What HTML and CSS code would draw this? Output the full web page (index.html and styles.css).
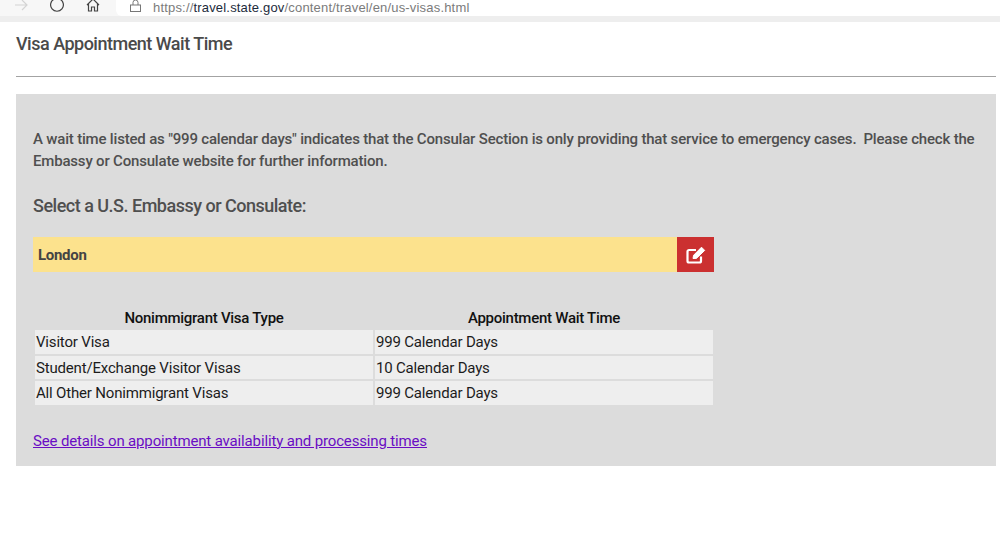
FILE: index.html
```html
<!DOCTYPE html>
<html lang="en">
<head>
    <meta charset="UTF-8">
    <meta name="viewport" content="width=device-width, initial-scale=1.0">
    <title>Visa Appointment Wait Time</title>
    <link rel="stylesheet" href="styles.css">
</head>
<body>
    <div class="browser-bar">
        <svg class="nav-icon" width="16" height="16" viewBox="0 0 16 16" fill="none" stroke="#d4d4d4" stroke-width="1.2"><path d="M2 8h12M9 3l5 5-5 5"/></svg>
        <svg class="nav-icon" width="16" height="16" viewBox="0 0 16 16" fill="none" stroke="#444" stroke-width="1.2"><path d="M11 2.2A6.4 6.4 0 1 1 5 2.2"/></svg>
        <svg class="nav-icon" width="16" height="16" viewBox="0 0 16 16" fill="none" stroke="#444" stroke-width="1.2"><path d="M2 8l6-6 6 6M3.500 7v7h3v-4h3v4h3V7"/></svg>
        <div class="address-bar">
            <svg class="lock" width="11" height="12" viewBox="0 0 11 12" fill="none" stroke="#777" stroke-width="1"><rect x="0.500" y="5" width="10" height="6.500"/><path d="M3 5V2.500a2.500 2.500 0 0 1 5 0V5"/></svg>
            <span class="url">https://<b>travel.state.gov</b>/content/travel/en/us-visas.html</span>
        </div>
    </div>

    <div class="page">
        <h1>Visa Appointment Wait Time</h1>
        <hr class="title-rule">

        <div class="panel">
            <p class="notice">A wait time listed as "999 calendar days" indicates that the Consular Section is only providing that service to emergency cases.&nbsp; Please check the Embassy or Consulate website for further information.</p>
            <h2>Select a U.S. Embassy or Consulate:</h2>

            <div class="post-select">
                <div class="post-name">London</div>
                <div class="edit-btn">
                    <svg width="20" height="18" viewBox="0 0 20 18" fill="none" stroke="#fff" stroke-width="2.2"><path d="M15 10.500V15a1.500 1.500 0 0 1-1.500 1.500H3A1.500 1.500 0 0 1 1.500 15V5.500A1.500 1.500 0 0 1 3 4h7"/><path d="M7 12.500l.6-3.200L15.500 1.200l3.200 3.200-8.300 8z" fill="#fff" stroke-width="1"/></svg>
                </div>
            </div>

            <table class="wait-table">
                <thead>
                    <tr><th>Nonimmigrant Visa Type</th><th>Appointment Wait Time</th></tr>
                </thead>
                <tbody>
                    <tr><td>Visitor Visa</td><td>999 Calendar Days</td></tr>
                    <tr><td>Student/Exchange Visitor Visas</td><td>10 Calendar Days</td></tr>
                    <tr><td>All Other Nonimmigrant Visas</td><td>999 Calendar Days</td></tr>
                </tbody>
            </table>

            <a class="details-link" href="#">See details on appointment availability and processing times</a>
        </div>
    </div>
</body>
</html>
```

FILE: styles.css
```css
html, body {
    margin: 0;
    padding: 0;
}
body {
    font-family: Roboto, Arial, sans-serif;
    background-color: #fff;
    color: #4a4a4a;
    height: 535px;
    overflow: hidden;
}
.browser-bar {
    display: flex;
    align-items: flex-start;
    height: 16px;
    padding-left: 13px;
    background-color: #f7f7f7;
    border-bottom: 6px solid #eeeeee;
}
.nav-icon {
    margin-right: 20px;
    flex-shrink: 0;
    margin-top: -3px;
}
.address-bar {
    display: flex;
    align-items: flex-start;
    gap: 12px;
    flex: 1;
    height: 16px;
    margin-left: -5px;
    padding-left: 14px;
    background-color: #fff;
    border-bottom-left-radius: 6px;
}
.url {
    font-family: "Liberation Sans", Arial, sans-serif;
    font-size: 13px;
    line-height: 15px;
    letter-spacing: 0.18px;
    color: #7b7b7b;
}
.url b {
    font-weight: 400;
    color: #1c2b3c;
}
.page {
    padding: 0 4px 0 16px;
}
h1 {
    font-size: 18px;
    font-weight: 500;
    line-height: 22px;
    letter-spacing: -0.5px;
    margin: 11px 0 0;
    color: #4a4a4a;
}
.title-rule {
    border: 0;
    border-top: 1px solid #a3a3a3;
    margin: 21px 0 17px;
}
.panel {
    background-color: #dcdcdc;
    padding: 34px 17px 15px;
    height: 372px;
    box-sizing: border-box;
}
.notice {
    margin: 0;
    font-size: 15px;
    font-weight: 500;
    line-height: 22px;
    letter-spacing: -0.185px;
    color: #4f4f4f;
}
h2 {
    font-size: 18px;
    font-weight: 500;
    line-height: 24px;
    letter-spacing: -0.5px;
    margin: 22px 0 0;
    color: #4f4f4f;
}
.post-select {
    display: flex;
    width: 681px;
    height: 35px;
    margin: 19px 0 0;
}
.post-name {
    flex: 1;
    background-color: #fce28d;
    color: #444;
    font-size: 15px;
    font-weight: 700;
    line-height: 37px;
    letter-spacing: -0.3px;
    padding-left: 5px;
}
.edit-btn {
    display: flex;
    align-items: center;
    justify-content: center;
    width: 37px;
    background-color: #cb3030;
}
.wait-table {
    border-collapse: separate;
    border-spacing: 2px;
    table-layout: fixed;
    width: 682px;
    margin: 34px 0 0;
    font-size: 15px;
    color: #1c1c1c;
}
.wait-table th {
    font-weight: 500;
    color: #111;
    line-height: 20px;
    letter-spacing: -0.27px;
    padding: 0;
    text-align: center;
}
.wait-table td {
    background-color: #eeeeee;
    height: 23.5px;
    line-height: 21px;
    padding: 2px 1px 0;
    box-sizing: border-box;
    letter-spacing: -0.18px;
}
.wait-table th:first-child {
    width: 338px;
}
.details-link {
    display: inline-block;
    margin-top: 25px;
    font-size: 15px;
    letter-spacing: -0.15px;
    color: #6a0dc4;
}
```
